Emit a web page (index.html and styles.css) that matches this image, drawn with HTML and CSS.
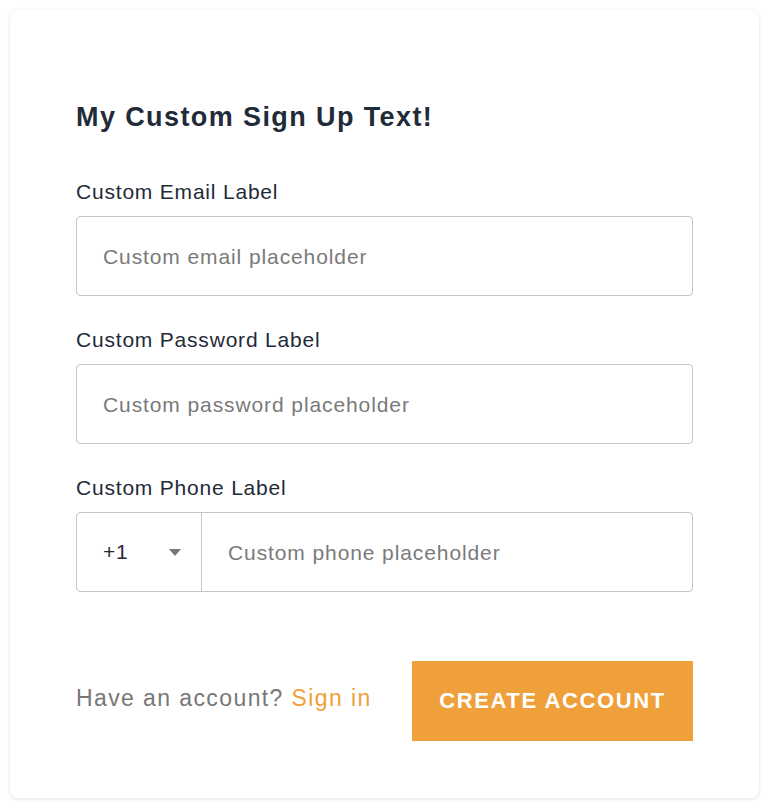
FILE: index.html
```html
<!DOCTYPE html>
<html lang="en">
<head>
    <meta charset="UTF-8">
    <meta name="viewport" content="width=device-width, initial-scale=1.0">
    <title>Sign Up</title>
    <link rel="stylesheet" href="styles.css">
</head>
<body>
    <div class="card">
        <h1 class="title">My Custom Sign Up Text!</h1>
        <form class="signup-form">
            <label class="field-label" for="email">Custom Email Label</label>
            <input class="field-input" id="email" type="text" placeholder="Custom email placeholder">

            <label class="field-label" for="password">Custom Password Label</label>
            <input class="field-input" id="password" type="password" placeholder="Custom password placeholder">

            <label class="field-label" for="phone">Custom Phone Label</label>
            <div class="phone-group">
                <div class="country-select">
                    <span>+1</span>
                    <span class="caret"></span>
                </div>
                <input class="phone-input" id="phone" type="text" placeholder="Custom phone placeholder">
            </div>

            <div class="form-footer">
                <p class="signin-text">Have an account? <a href="#">Sign in</a></p>
                <button type="button" class="create-btn">Create Account</button>
            </div>
        </form>
    </div>
</body>
</html>
```

FILE: styles.css
```css
body {
    font-family: 'Liberation Sans', Arial, sans-serif;
    background-color: #fff;
    margin: 0;
    padding: 10px 9px 11px 10px;
}
.card {
    background: #fff;
    border-radius: 8px;
    box-shadow: 0 1px 4px rgba(0, 0, 0, 0.12);
    padding: 91px 66px 57px 66px;
}
.title {
    font-size: 27px;
    line-height: 32px;
    font-weight: bold;
    letter-spacing: 1.4px;
    color: #1f2b38;
    margin: 0 0 47px 0;
}
.field-label {
    display: block;
    font-size: 21px;
    line-height: 24px;
    letter-spacing: 0.8px;
    color: #1f2b38;
    margin-bottom: 12px;
}
.field-input,
.phone-group {
    display: block;
    width: 100%;
    height: 80px;
    box-sizing: border-box;
    border: 1.5px solid #c6c6c6;
    border-radius: 4px;
    margin-bottom: 32px;
}
.field-input {
    padding: 2px 26px 0 26px;
    font-family: inherit;
    font-size: 21px;
    letter-spacing: 0.9px;
    color: #333;
    outline: none;
}
::placeholder {
    color: #7a7a7a;
}
.phone-group {
    display: flex;
    margin-bottom: 0;
}
.country-select {
    width: 125px;
    display: flex;
    align-items: center;
    justify-content: space-between;
    padding: 0 20px 0 26px;
    box-sizing: border-box;
    border-right: 1.5px solid #c6c6c6;
    font-size: 21px;
    letter-spacing: 0.8px;
    color: #1f2b38;
}
.caret {
    width: 0;
    height: 0;
    border-left: 6px solid transparent;
    border-right: 6px solid transparent;
    border-top: 7px solid #777;
}
.phone-input {
    flex: 1;
    border: none;
    padding: 2px 26px 0 26px;
    font-family: inherit;
    font-size: 21px;
    letter-spacing: 0.9px;
    outline: none;
    background: transparent;
}
.form-footer {
    display: flex;
    justify-content: space-between;
    align-items: center;
    margin-top: 69px;
}
.signin-text {
    margin: 0 0 6px 0;
    font-size: 23px;
    letter-spacing: 1.4px;
    color: #777;
}
.signin-text a {
    color: #f0a03a;
    text-decoration: none;
}
.create-btn {
    width: 281px;
    height: 80px;
    background: #f0a03a;
    border: none;
    color: #fff;
    font-family: inherit;
    font-size: 22px;
    font-weight: bold;
    letter-spacing: 1.6px;
    text-transform: uppercase;
}
```
